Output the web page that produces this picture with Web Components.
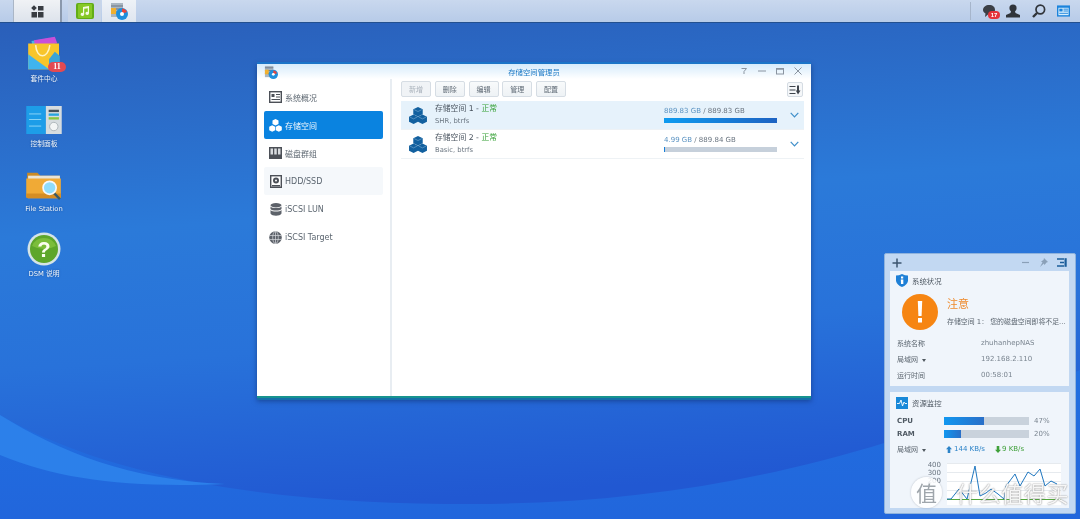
<!DOCTYPE html>
<html lang="zh">
<head>
<meta charset="utf-8">
<title>DSM</title>
<style>
  html, body { margin: 0; height: 100%; overflow: hidden; }
  body { font-family: "DejaVu Sans", "Noto Sans CJK SC", sans-serif; }
</style>
</head>
<body>
<dsm-desktop>
  <dsm-taskbar slot="bar"></dsm-taskbar>

  <dsm-icon label="套件中心">
    <svg width="34" height="35" viewBox="0 0 40 42">
      <path d="M5 6 L30 2 L33 10 L6 12Z" fill="#45b7e8"/>
      <path d="M8 5 L33 1 L36 9 L9 11Z" fill="#c94fd8"/>
      <path d="M1 9 H38 V40 H1Z" fill="#f7c52b"/>
      <path d="M1 22 L26 40 H1Z" fill="#3fb4ee"/>
      <path d="M10 11 C11 28 25 28 27 11" fill="none" stroke="#fff3c4" stroke-width="1.800"/>
      <path d="M26 28 L33 19 L39 24 V38 H26Z" fill="#3aa4d6"/>
    </svg>
    <span slot="badge" class="badge">11</span>
  </dsm-icon>
  <dsm-icon label="控制面板">
    <svg width="36" height="28" viewBox="0 0 38 30" style="margin-bottom:2px">
      <rect width="21" height="30" fill="#1d9de8"/>
      <rect x="21" width="17" height="30" fill="#d6dcdf"/>
      <g fill="#8fd6f7"><rect x="3" y="8" width="13" height="1"/><rect x="3" y="14" width="13" height="1"/><rect x="3" y="21" width="13" height="1"/></g>
      <g><rect x="24" y="4" width="11" height="2.500" fill="#47525c"/><rect x="24" y="8" width="11" height="2.500" fill="#28a5df"/><rect x="24" y="12" width="11" height="2.500" fill="#8bc63f"/></g>
      <circle cx="29.500" cy="22" r="4.500" fill="#f3f5f5" stroke="#a9b2b6"/>
    </svg>
  </dsm-icon>
  <dsm-icon label="File Station">
    <svg width="36" height="29" viewBox="0 0 38 31" style="margin-bottom:1px">
      <path d="M1 2 H12 L15 5 H36 V10 H1Z" fill="#c98a25"/>
      <rect x="2" y="5" width="34" height="5" fill="#e9e4d6"/>
      <path d="M0 8 H37 V28 Q37 29 36 29 H2 Q0 29 0 27Z" fill="#f0aa36"/>
      <path d="M0 24 H37 V28 Q37 29 36 29 H2 Q0 29 0 27Z" fill="#d58d24"/>
      <path d="M30 24 L36 30" stroke="#3a5a66" stroke-width="2.500"/>
      <circle cx="25" cy="18" r="7" fill="#8fdcfb" stroke="#f6f8fa" stroke-width="1.800"/>
    </svg>
  </dsm-icon>
  <dsm-icon label="DSM 说明">
    <svg width="34" height="34" viewBox="0 0 34 34">
      <circle cx="17" cy="17" r="16.500" fill="#d5e4e6"/>
      <circle cx="17" cy="17" r="14" fill="#5da62a"/>
      <path d="M5 14 A13 13 0 0 1 29 14 Q17 20 5 14Z" fill="#7bbd3a"/>
      <text x="17" y="25" text-anchor="middle" font-family="Liberation Sans" font-weight="700" font-size="22" fill="#fbfdf0">?</text>
    </svg>
  </dsm-icon>

  <dsm-window slot="float" win-title="存储空间管理员">
    <svg slot="logo" width="14" height="14" viewBox="0 0 15 15">
      <rect x="1" y="1" width="9" height="12" fill="#a9b6c2"/>
      <path d="M1 3 H10 M1 6 H10 M1 9 H10" stroke="#6a7785"/>
      <rect x="1" y="5" width="4" height="5" fill="#f0b030"/>
      <circle cx="10" cy="10" r="5" fill="#1f8fdc"/>
      <path d="M10 10 V6 A4 4 0 0 1 13.800 9Z" fill="#e8453a"/>
      <circle cx="10" cy="10" r="1.500" fill="#fff"/>
    </svg>

    <dsm-nav-item slot="nav" label="系统概况">
      <svg width="13" height="12" viewBox="0 0 13 12"><rect x=".7" y=".7" width="11.600" height="10.600" fill="none" stroke="#4c5057" stroke-width="1.400"/><rect x="2.500" y="3" width="3" height="3" fill="#4c5057"/><path d="M7 3.500H11M7 6H11M2.500 8.500H11" stroke="#4c5057"/></svg>
    </dsm-nav-item>
    <dsm-nav-item slot="nav" label="存储空间" active>
      <svg width="13" height="13" viewBox="0 0 13 13" fill="#fff"><path d="M6.500 0 L9.500 1.500 V5 L6.500 6.500 L3.500 5 V1.500Z"/><path d="M3.200 6.200 L6.200 7.700 V11.200 L3.200 12.700 L.2 11.200 V7.700Z"/><path d="M9.800 6.200 L12.800 7.700 V11.200 L9.800 12.700 L6.800 11.200 V7.700Z"/></svg>
    </dsm-nav-item>
    <dsm-nav-item slot="nav" label="磁盘群组">
      <svg width="13" height="12" viewBox="0 0 13 12"><rect width="13" height="12" fill="#4c5057"/><g fill="#d9dcdf"><rect x="1.500" y="1.500" width="2.500" height="6"/><rect x="5.250" y="1.500" width="2.500" height="6"/><rect x="9" y="1.500" width="2.500" height="6"/></g></svg>
    </dsm-nav-item>
    <dsm-nav-item slot="nav" label="HDD/SSD" hover>
      <svg width="12" height="13" viewBox="0 0 12 13"><rect x=".7" y=".7" width="10.600" height="11.600" fill="#fff" stroke="#4c5057" stroke-width="1.400"/><circle cx="6" cy="5.500" r="3" fill="#4c5057"/><circle cx="6" cy="5.500" r="1" fill="#fff"/><rect x="2" y="10" width="8" height="1.500" fill="#4c5057"/></svg>
    </dsm-nav-item>
    <dsm-nav-item slot="nav" label="iSCSI LUN">
      <svg width="12" height="13" viewBox="0 0 12 13" fill="#5d626a"><ellipse cx="6" cy="2.200" rx="5.500" ry="2.200"/><path d="M.5 3.500 C2 5.500 10 5.500 11.500 3.500 V6 C10 8 2 8 .5 6Z"/><path d="M.5 7 C2 9 10 9 11.500 7 V10.500 C10 13.500 2 13.500 .5 10.500Z"/></svg>
    </dsm-nav-item>
    <dsm-nav-item slot="nav" label="iSCSI Target">
      <svg width="13" height="13" viewBox="0 0 13 13"><circle cx="6.500" cy="6.500" r="6.300" fill="#5d626a"/><g fill="none" stroke="#d7dade" stroke-width=".7"><ellipse cx="6.500" cy="6.500" rx="2.800" ry="6.200"/><path d="M6.500 .3V12.700M.4 4.500H12.600M.4 8.500H12.600"/></g></svg>
    </dsm-nav-item>

    <dsm-button slot="tools" disabled>新增</dsm-button>
    <dsm-button slot="tools">删除</dsm-button>
    <dsm-button slot="tools">编辑</dsm-button>
    <dsm-button slot="tools">管理</dsm-button>
    <dsm-button slot="tools">配置</dsm-button>

    <dsm-volume slot="rows" name="存储空间 1" kind="SHR, btrfs" used="889.83 GB" total="889.83 GB" percent="100" selected></dsm-volume>
    <dsm-volume slot="rows" name="存储空间 2" kind="Basic, btrfs" used="4.99 GB" total="889.84 GB" percent="1"></dsm-volume>
  </dsm-window>

  <dsm-widgets slot="float"></dsm-widgets>
  <dsm-watermark slot="float"></dsm-watermark>
</dsm-desktop>

<script>
const UI_FONT = `"DejaVu Sans", "Noto Sans CJK SC", sans-serif`;

class DsmDesktop extends HTMLElement {
	constructor () {
		super();
		this.attachShadow({ mode: 'open' });
		this.shadowRoot.innerHTML = `
		<style>
		:host { display: flex; flex-direction: column; position: relative; width: 1080px; height: 519px; overflow: hidden; background: #2a70d2; font-family: ${UI_FONT}; filter: blur(.35px); }
		.wall { position: absolute; inset: 0; }
		.bar { position: relative; flex: none; }
		.icons { position: relative; display: flex; flex-direction: column; gap: 16px; width: 60px; padding: 13px 0 0 14px; }
		</style>
		<svg class="wall" width="1080" height="519" viewBox="0 0 1080 519">
			<defs>
				<linearGradient id="sky" x1="0" y1="0" x2="0.15" y2="1">
					<stop offset="0" stop-color="#2a5cb6"/>
					<stop offset=".45" stop-color="#2b7ad9"/>
					<stop offset=".7" stop-color="#2872da"/>
					<stop offset="1" stop-color="#2158d2"/>
				</linearGradient>
				<linearGradient id="low" x1="0" y1="0" x2="0" y2="1">
					<stop offset="0" stop-color="#2270e0"/>
					<stop offset="1" stop-color="#2166dc"/>
				</linearGradient>
			</defs>
			<rect width="1080" height="519" fill="url(#sky)"/>
			<path d="M0 415 C130 490 320 504 470 504 C680 504 860 465 1080 370 V519 H0Z" fill="url(#low)"/>
			<path d="M0 415 C60 452 130 480 225 484 C130 488 60 480 0 455Z" fill="#2c80ea"/>
		</svg>
		<div class="bar"><slot name="bar"></slot></div>
		<div class="icons"><slot></slot></div>
		<slot name="float"></slot>
		`;
	}
}

class DsmTaskbar extends HTMLElement {
	constructor () {
		super();
		this.attachShadow({ mode: 'open' });
		this.shadowRoot.innerHTML = `
		<style>
		:host { display: flex; align-items: stretch; height: 22px; padding-left: 13px; background: linear-gradient(#c9d8ee, #b7cbe8); border-bottom: 1px solid #23508f; }
		.cell { display: flex; align-items: center; justify-content: center; }
		.start { width: 49px; background: linear-gradient(#f0f2f5, #dde3ec); border-left: 1px solid #aab6c6; border-right: 2px solid #8a98ac; box-sizing: border-box; }
		.app { width: 33px; margin-left: 6px; background: #c8d5e8; }
		.app.on { width: 34px; margin-left: 1px; background: linear-gradient(#eef2f7, #dfe6f0); }
		.tray { margin-left: auto; display: flex; align-items: center; border-left: 1px solid #a6b5cb; padding-left: 12px; height: 18px; align-self: center; padding-right: 10px; }
		.chat { position: relative; display: flex; }
		.chat b { position: absolute; left: 5px; top: 6px; min-width: 12px; height: 8px; font: 700 6px/8px "Liberation Sans", sans-serif; color: #fff; background: #e5333b; border-radius: 4px; text-align: center; }
		</style>
		<div class="cell start">
			<svg width="13" height="13" viewBox="0 0 13 13" fill="#383c42"><path d="M3 .2 L5.800 3 L3 5.800 L.2 3Z"/><rect x="7" y="1" width="5.500" height="4.500"/><rect x=".5" y="7" width="5.500" height="5.500"/><rect x="7" y="7" width="5.500" height="5.500"/></svg>
		</div>
		<div class="cell app">
			<svg width="18" height="16" viewBox="0 0 18 16"><rect width="18" height="16" rx="2" fill="#62ad16"/><rect x="2" y="1" width="14" height="14" rx="1" fill="#86c827"/><path d="M7 4 L13 3 V10.500 A1.800 1.500 0 1 1 11.800 9 V5.200 L8.200 5.800 V11.500 A1.800 1.500 0 1 1 7 10Z" fill="#f4fae3"/></svg>
		</div>
		<div class="cell app on">
			<svg width="18" height="17" viewBox="0 0 18 17"><rect x="1" y="0" width="12" height="14" fill="#a9b6c2"/><path d="M1 3H13M1 6H13M1 9H13" stroke="#6a7785"/><rect x="1" y="5" width="5" height="6" fill="#f0b030"/><circle cx="12" cy="11" r="6" fill="#1f8fdc"/><path d="M12 11 V5.500 A5.500 5.500 0 0 1 17 9Z" fill="#e8453a"/><circle cx="12" cy="11" r="2" fill="#fff"/></svg>
		</div>
		<div class="tray">
			<span class="chat">
				<svg width="14" height="13" viewBox="0 0 14 13"><path d="M6 0 C10 0 12 2 12 5 C12 8 9 10 5 9.500 L2 12 L2.500 8.500 C1 7.500 0 6.500 0 5 C0 2 3 0 6 0Z" fill="#3b3f46"/></svg>
				<b>17</b>
			</span>
			<svg width="14" height="14" viewBox="0 0 14 14" fill="#30343a" style="margin-left:9px"><circle cx="7" cy="4" r="3.600"/><path d="M5 7 H9 L9.500 9 L14 11 V13.500 H0 V11 L4.500 9Z"/></svg>
			<svg width="14" height="14" viewBox="0 0 14 14" fill="none" stroke="#30343a" style="margin-left:12px"><circle cx="8.300" cy="5.500" r="4.300" stroke-width="1.700"/><path d="M5 9 L1 13" stroke-width="2.400"/></svg>
			<svg width="13" height="12" viewBox="0 0 14 12" style="margin-left:11px"><rect width="14" height="12" fill="#1b83dc"/><rect x="1.500" y="2.500" width="11" height="8" fill="#d8eefc"/><rect x="2.500" y="3.500" width="3.500" height="3" fill="#1b83dc"/><path d="M7 4H12M7 6H12M2.500 8.500H12" stroke="#1b83dc"/></svg>
		</div>
		`;
	}
}

class DsmIcon extends HTMLElement {
	constructor () {
		super();
		this.attachShadow({ mode: 'open' });
		this.shadowRoot.innerHTML = `
		<style>
		:host { display: flex; flex-direction: column; align-items: center; width: 60px; position: relative; }
		.pic { display: flex; align-items: flex-end; justify-content: center; height: 35px; position: relative; }
		.label { font-size: 6.800px; line-height: 11px; color: #eef5fc; margin-top: 3px; white-space: nowrap; text-shadow: 0 0 2px #1a4a90; }
		::slotted(.badge) { position: absolute; right: -5px; bottom: -1px; height: 10px; min-width: 18px; border-radius: 5px; background: #e24a52; color: #fff; font: 700 8px/10px "Liberation Serif", serif; text-align: center; }
		</style>
		<div class="pic"><slot></slot><slot name="badge"></slot></div>
		<div class="label"></div>
		`;
		this.shadowRoot.querySelector('.label').textContent = this.getAttribute('label');
	}
}

class DsmWindow extends HTMLElement {
	constructor () {
		super();
		this.attachShadow({ mode: 'open' });
		this.shadowRoot.innerHTML = `
		<style>
		:host { position: absolute; left: 257px; top: 62px; width: 554px; height: 336px; display: flex; flex-direction: column; box-sizing: border-box; background: #fff; border-top: 2px solid #1b74c8; border-bottom: 2px solid #17938f; box-shadow: 0 2px 0 #166fa8, 0 3px 5px rgba(10,30,80,.5); }
		.head { position: relative; flex: none; display: flex; align-items: center; justify-content: center; height: 15px; background: linear-gradient(#d6ebfb, #fff); color: #1a78c4; font-size: 7.400px; }
		.logo { position: absolute; left: 7px; top: 1px; display: flex; }
		.ctl { position: absolute; right: 8px; top: 2px; display: flex; gap: 8px; color: #7f8a96; }
		.body { flex: 1; display: flex; min-height: 0; }
		.side { width: 135px; flex: none; box-sizing: border-box; border-right: 2px solid #e8edf2; padding: 4px 7px 0; display: flex; flex-direction: column; }
		.main { flex: 1; padding: 2px 7px 0 9px; display: flex; flex-direction: column; }
		.tools { display: flex; gap: 3.750px; height: 16px; }
		.sort { margin-left: auto; margin-right: 1px; width: 16px; height: 15px; margin-top: 1px; box-sizing: border-box; border: 1px solid #d5dce3; background: #f5f7f9; border-radius: 2px; display: flex; align-items: center; justify-content: center; }
		.rows { margin-top: 4px; display: flex; flex-direction: column; }
		</style>
		<div class="head">
			<span class="logo"><slot name="logo"></slot></span>
			<span class="title"></span>
			<span class="ctl">
				<svg width="10" height="10" viewBox="0 0 10 10" fill="none" stroke="#8a94a0"><path d="M2.500 2.500H7.500L5 5.500V8"/></svg>
				<svg width="10" height="10" viewBox="0 0 10 10" stroke="#8a94a0"><path d="M1 5H9"/></svg>
				<svg width="10" height="10" viewBox="0 0 10 10" fill="none" stroke="#8a94a0"><rect x="1.500" y="2.500" width="7" height="5.500"/><path d="M1.500 3H8.500" stroke-width="1.500"/></svg>
				<svg width="10" height="10" viewBox="0 0 10 10" stroke="#8a94a0"><path d="M1.500 1.500L8.500 8.500M8.500 1.500L1.500 8.500"/></svg>
			</span>
		</div>
		<div class="body">
			<div class="side"><slot name="nav"></slot></div>
			<div class="main">
				<div class="tools">
					<slot name="tools"></slot>
					<span class="sort"><svg width="12" height="10" viewBox="0 0 12 10"><path d="M.5 1.500H6.500M.5 5H6.500M.5 8.500H6.500" stroke="#3f444c" stroke-width="1.200"/><path d="M8 .5H10V5.500H11.500L9 9.500L6.800 5.500H8Z" fill="#3f444c"/></svg></span>
				</div>
				<div class="rows"><slot name="rows"></slot></div>
			</div>
		</div>
		`;
		this.shadowRoot.querySelector('.title').textContent = this.getAttribute('win-title');
	}
}

class DsmNavItem extends HTMLElement {
	constructor () {
		super();
		this.attachShadow({ mode: 'open' });
		this.shadowRoot.innerHTML = `
		<style>
		:host { display: flex; align-items: center; gap: 3px; height: 28px; padding-left: 5px; box-sizing: border-box; font-size: 8px; color: #5c6670; border-radius: 2px; }
		:host([active]) { background: #0a83e0; color: #f3f9fe; }
		:host([hover]) { background: #f5f8fb; }
		.ic { width: 13px; display: flex; justify-content: center; }
		</style>
		<span class="ic"><slot></slot></span><span class="t"></span>
		`;
		this.shadowRoot.querySelector('.t').textContent = this.getAttribute('label');
	}
}

class DsmButton extends HTMLElement {
	constructor () {
		super();
		this.attachShadow({ mode: 'open' });
		this.shadowRoot.innerHTML = `
		<style>
		:host { display: flex; align-items: center; justify-content: center; width: 30px; height: 16px; box-sizing: border-box; border: 1px solid #d6dde4; border-radius: 2px; background: linear-gradient(#f8fafb, #eef2f5); font-size: 7px; color: #5f6a75; }
		:host([disabled]) { color: #aab3bc; background: #f0f3f6; }
		</style>
		<slot></slot>
		`;
	}
}

class DsmVolume extends HTMLElement {
	constructor () {
		super();
		this.attachShadow({ mode: 'open' });
		this.shadowRoot.innerHTML = `
		<style>
		:host { display: flex; align-items: center; height: 29px; box-sizing: border-box; border-bottom: 1px solid #eef2f5; font-size: 6.800px; color: #6a7580; }
		:host([selected]) { background: #e6f2fb; }
		.cube { width: 34px; display: flex; justify-content: center; box-sizing: border-box; }
		.info { flex: 1; line-height: 12px; }
		.name { color: #4b5560; font-size: 7.800px; }
		.ok { color: #3aa33a; }
		.use { width: 113px; margin-right: 31px; flex: none; font-size: 7px; }
		.nums { line-height: 12px; margin-top: -3px; color: #6a7580; }
		.nums i { font-style: normal; color: #5b93c2; }
		.track { height: 5px; background: #c6d0db; margin-top: 1px; }
		.fill { height: 100%; background: linear-gradient(90deg, #0e9bf0, #1e63c2); }
		svg.v { margin-left: -18px; margin-right: 5px; }
		</style>
		<span class="cube">
			<svg width="18" height="17" viewBox="0 0 19 18" fill="#12609f"><path d="M9.500 0 L14.500 2.400 V7.600 L9.500 10 L4.500 7.600 V2.400Z"/><path d="M4.800 8 L9.500 10.300 V15.600 L4.800 18 L0 15.600 V10.300Z"/><path d="M14.200 8 L19 10.300 V15.600 L14.200 18 L9.500 15.600 V10.300Z"/><path d="M5.500 2.800 L9.500 4.800 L13.500 2.800 M.8 10.600 L4.800 12.600 L8.700 10.600 M10.300 10.600 L14.200 12.600 L18.200 10.600" fill="none" stroke="#9cc4e2" stroke-width=".5"/></svg>
		</span>
		<div class="info">
			<div class="name"><span class="n"></span> - <span class="ok">正常</span></div>
			<div class="kind"></div>
		</div>
		<div class="use">
			<div class="nums"><i class="u"></i> / <span class="tot"></span></div>
			<div class="track"><div class="fill"></div></div>
		</div>
		<svg class="v" width="9" height="6" viewBox="0 0 9 6" fill="none" stroke="#3f8fc9" stroke-width="1.200"><path d="M.7 .8L4.500 4.800L8.300 .8"/></svg>
		`;
		const root = this.shadowRoot;
		root.querySelector('.n').textContent = this.getAttribute('name');
		root.querySelector('.kind').textContent = this.getAttribute('kind');
		root.querySelector('.u').textContent = this.getAttribute('used');
		root.querySelector('.tot').textContent = this.getAttribute('total');
		root.querySelector('.fill').style.width = this.getAttribute('percent') + '%';
	}
}

class DsmWidgets extends HTMLElement {
	constructor () {
		super();
		this.attachShadow({ mode: 'open' });
		this.shadowRoot.innerHTML = `
		<style>
		:host { position: absolute; left: 884px; top: 253px; width: 192px; height: 261px; box-sizing: border-box; display: flex; flex-direction: column; padding: 0 6px 5px 5px; background: #c2d8f2; border: 1px solid #8fb3dd; border-radius: 2px; font-size: 7px; color: #5c6670; }
		.top { height: 17px; display: flex; align-items: center; flex: none; }
		.top .r { margin-left: auto; margin-right: 2px; display: flex; gap: 9px; align-items: center; }
		.card { background: #f0f5fb; box-sizing: border-box; }
		.status { height: 115px; padding: 3px 6px; }
		.mon { height: 116px; margin-top: 6px; padding: 4px 6px 0; }
		h3 { margin: 0; display: flex; align-items: center; gap: 4px; font-weight: 400; font-size: 7.400px; height: 13px; color: #4f5963; }
		.alert { display: flex; gap: 9px; margin: 7px 0 0 6px; height: 36px; }
		.big { font-size: 11px; line-height: 14px; color: #ee8a2c; margin-top: 4px; }
		.msg { margin-top: 4.500px; line-height: 11px; font-size: 6.900px; white-space: nowrap; color: #5c6670; }
		.kv { display: grid; grid-template-columns: 84px 1fr; grid-auto-rows: 16px; align-items: center; margin: 5px 0 0 1px; }
		.kv span:nth-child(even) { color: #7a8590; }
		.m { display: grid; grid-template-columns: 47px 85px 1fr; grid-auto-rows: 13.500px; align-items: center; margin: 5px 0 0 1px; }
		.m b { color: #4f5963; }
		.track { height: 8px; background: #c9d2dc; }
		.fill { height: 100%; background: linear-gradient(90deg, #1197f0, #2a6fc8); }
		.pc { padding-left: 5px; color: #7a8590; }
		.net { display: flex; align-items: center; height: 15px; margin: .5px 0 0 1px; }
		.net .lan { width: 49px; }
		.up, .dn { display: flex; align-items: center; gap: 2px; }
		.up { color: #2c83c8; margin-right: 10px; }
		.dn { color: #3fa03a; gap: 1px; }
		.caret { display: inline-block; border: 2px solid transparent; border-top: 3px solid #50585f; border-bottom: 0; vertical-align: middle; margin-left: 2px; }
		.chart { position: relative; height: 42px; margin: 6px 0 0 51px; width: 114px; background: #fff; }
		.chart svg { position: absolute; left: 0; top: 0; }
		.yl { position: absolute; left: -25px; top: -2px; width: 19px; text-align: right; line-height: 8.300px; color: #6a7580; }
		</style>
		<div class="top">
			<svg width="10" height="10" viewBox="0 0 10 10" stroke="#3d5570" stroke-width="1.500" style="margin-left:2px"><path d="M5 .5V9.500M.5 5H9.500"/></svg>
			<span class="r">
				<svg width="9" height="9" viewBox="0 0 9 9" stroke="#8aa0b8" stroke-width="1.200"><path d="M1 4.500H8"/></svg>
				<svg width="9" height="9" viewBox="0 0 9 9" fill="#8aa0b8"><path d="M5 0L9 4L7.500 4.500L5.500 7L4.800 5.500L1 9L3.500 4.200L2 3.500L4.500 2Z"/></svg>
				<svg width="10" height="9" viewBox="0 0 10 9"><path d="M0 1H7M3 4.500H7M0 8H7" stroke="#1b5d9a" stroke-width="1.500"/><rect x="7.500" y=".2" width="2.200" height="8.600" fill="#1b5d9a"/></svg>
			</span>
		</div>
		<div class="card status">
			<h3>
				<svg width="12" height="13" viewBox="0 0 12 13"><path d="M0 1.500 Q3 1.500 6 0 Q9 1.500 12 1.500 V7 Q11 11 6 13 Q1 11 0 7Z" fill="#1f80d6"/><rect x="5" y="2.500" width="2.200" height="2" fill="#fff"/><path d="M4.800 5.500H7.300V10H5Z" fill="#fff"/></svg>
				系统状况
			</h3>
			<div class="alert">
				<svg width="36" height="36" viewBox="0 0 36 36" style="flex:none"><circle cx="18" cy="18" r="18" fill="#f68512"/><path d="M15.800 7H20.200L19.600 22H16.400Z" fill="#fff"/><rect x="16" y="24" width="4" height="4.500" fill="#fff"/></svg>
				<div>
					<div class="big">注意</div>
					<div class="msg">存储空间 1： 您的磁盘空间即将不足...</div>
				</div>
			</div>
			<div class="kv">
				<span>系统名称</span><span>zhuhanhepNAS</span>
				<span>局域网 <i class="caret"></i></span><span>192.168.2.110</span>
				<span>运行时间</span><span>00:58:01</span>
			</div>
		</div>
		<div class="card mon">
			<h3>
				<svg width="12" height="12" viewBox="0 0 12 12"><rect width="12" height="12" fill="#1888d8"/><path d="M1 6.500H3.500L5 3L6.500 9L8 5L9 6.500H11" fill="none" stroke="#fff" stroke-width=".9"/></svg>
				资源监控
			</h3>
			<div class="m">
				<b>CPU</b><div class="track"><div class="fill" style="width:47%"></div></div><span class="pc">47%</span>
				<b>RAM</b><div class="track"><div class="fill" style="width:20%"></div></div><span class="pc">20%</span>
			</div>
			<div class="net">
				<span class="lan">局域网 <i class="caret"></i></span>
				<span class="up"><svg width="6" height="7" viewBox="0 0 6 7" fill="#2c83c8"><path d="M3 0L6 3.200H4.300V7H1.700V3.200H0Z"/></svg>144 KB/s</span>
				<span class="dn"><svg width="6" height="7" viewBox="0 0 6 7" fill="#3fa03a"><path d="M1.700 0H4.300V3.800H6L3 7L0 3.800H1.700Z"/></svg>9 KB/s</span>
			</div>
			<div class="chart">
				<div class="yl">400<br>300<br>200</div>
				<svg width="114" height="42" viewBox="0 0 114 42">
					<path d="M0 .5H114M0 9.500H114M0 18.500H114M0 27.500H114" stroke="#e6eaee"/>
					<path d="M0 36.500H114" stroke="#53a83c" stroke-width="1.200"/>
					<path d="M0 36 H4 L12 26 L20 36 L28 3 L33 33 L39 30 L44 26 L51 31 L57 36 L59 23 L68 11 L73 23 L81 9 L87 13 L93 6 L98 23 L104 18 L110 21" fill="none" stroke="#1f77c0" stroke-width="1"/>
				</svg>
			</div>
		</div>
		`;
	}
}

class DsmWatermark extends HTMLElement {
	constructor () {
		super();
		this.attachShadow({ mode: 'open' });
		this.shadowRoot.innerHTML = `
		<style>
		:host { position: absolute; left: 911px; top: 477px; display: flex; align-items: center; gap: 14px; font-family: "Noto Sans CJK SC", sans-serif; }
		.dot { width: 31px; height: 31px; border-radius: 50%; background: rgba(255,255,255,.85); box-shadow: 0 0 2px rgba(60,70,80,.35); display: flex; align-items: center; justify-content: center; font-size: 21px; line-height: 31px; color: #9fa6ac; }
		.t { font-size: 22px; line-height: 31px; color: rgba(255,255,255,.92); letter-spacing: .6px; white-space: nowrap; text-shadow: 0 0 1.500px #666; }
		</style>
		<span class="dot">值</span><span class="t">什么值得买</span>
		`;
	}
}

customElements.define('dsm-desktop', DsmDesktop);
customElements.define('dsm-taskbar', DsmTaskbar);
customElements.define('dsm-icon', DsmIcon);
customElements.define('dsm-window', DsmWindow);
customElements.define('dsm-nav-item', DsmNavItem);
customElements.define('dsm-button', DsmButton);
customElements.define('dsm-volume', DsmVolume);
customElements.define('dsm-widgets', DsmWidgets);
customElements.define('dsm-watermark', DsmWatermark);
</script>
</body>
</html>
